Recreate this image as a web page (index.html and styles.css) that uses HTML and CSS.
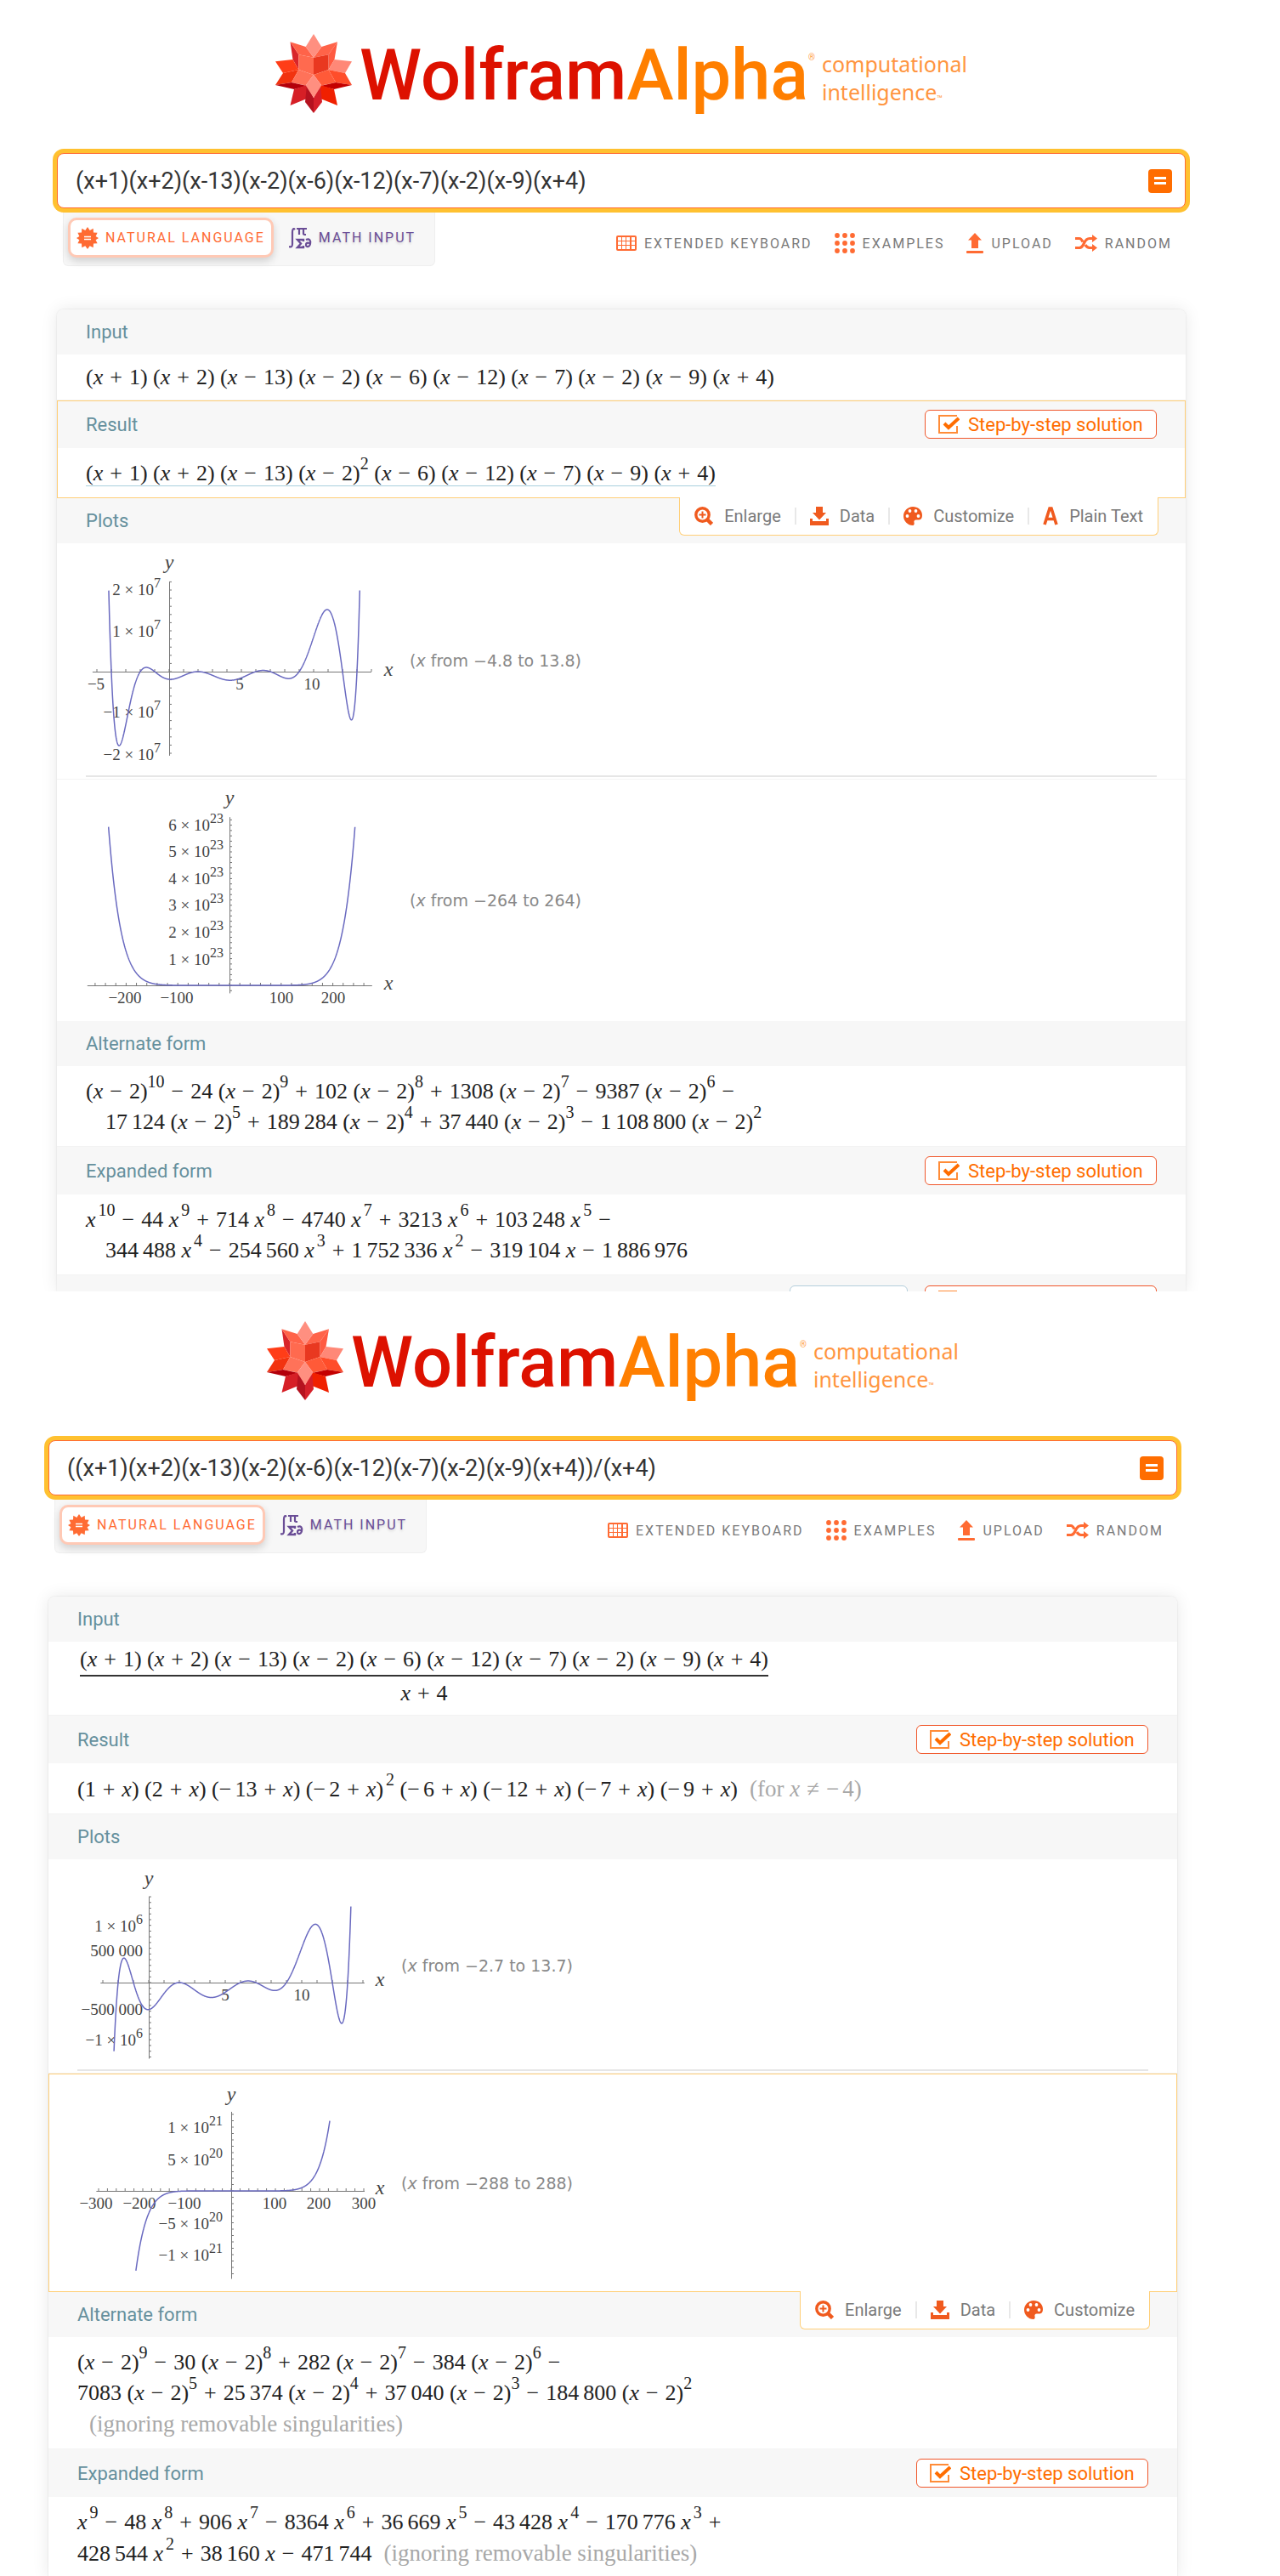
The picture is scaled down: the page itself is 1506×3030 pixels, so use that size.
FILE: index.html
```html
<!DOCTYPE html>
<html lang="en">
<head>
<meta charset="utf-8">
<meta name="viewport" content="width=device-width, initial-scale=1">
<title>WolframAlpha: computational intelligence</title>
<link rel="stylesheet" href="styles.css">
</head>
<body>
<svg class="sprite" aria-hidden="true">
  <symbol id="spikey" viewBox="0 0 90 93">
    <path fill="#d8252a" d="M17.500 9.300 27.400 24.300 27.400 42 20.500 30Z"/>
    <path fill="#ff6349" d="M17.500 9.300 35.700 15 45 27.700 27.400 24.300Z"/>
    <path fill="#ff6349" d="M73 9.300 54.300 15 45 27.700 62.500 24.300Z"/>
    <path fill="#ff5a41" d="M73 9.300 62.500 24.300 62.500 42 69.500 30Z"/>
    <path fill="#ff8f80" d="M45 0 35.700 15 45 27.700 54.300 15Z"/>
    <path fill="#ff6a4f" d="M27.400 24.300 45 27.700 45 48 27.400 42Z"/>
    <path fill="#e93820" d="M45 27.700 62.500 24.300 62.500 42 45 48Z"/>
    <path fill="#ff3d17" d="M0 32.300 20.500 30 27.400 42 9 46Z"/>
    <path fill="#ff8877" d="M90 32.300 69.500 30 62.500 42 82 46Z"/>
    <path fill="#f2330f" d="M0 60 9 46 27.400 42 19 57Z"/>
    <path fill="#ff4d2a" d="M90 60 82 46 62.500 42 71 57Z"/>
    <path fill="#ff7259" d="M27.400 42 45 48 35.700 60.500 19 57Z"/>
    <path fill="#ff5a38" d="M62.500 42 45 48 54.300 60.500 71 57Z"/>
    <path fill="#b3000b" d="M0 60 19 57 37 61 22 65Z"/>
    <path fill="#c40000" d="M90 60 71 57 53 61 69 65Z"/>
    <path fill="#d61f26" d="M17.500 84 22 65 37 60 37 76Z"/>
    <path fill="#f02000" d="M73 84 69 65 53 60 53 76Z"/>
    <path fill="#b5121f" d="M45 93 35 80 37 60 45 75Z"/>
    <path fill="#d6202a" d="M45 93 55 80 53 60 45 75Z"/>
    <path fill="#ff8f80" d="M45 48 35.700 60.500 45 75 54.300 60.500Z"/>
  </symbol>
  <symbol id="burst" viewBox="0 0 26 26">
    <path fill="#ff6b33" d="M13 0l2.700 4 4-2.200.3 4.700 4.600.3-2 4.200L26 13l-3.400 2.200 2 4-4.600.4-.3 4.600-4-2L13 26l-2.700-3.800-4 2-.3-4.600-4.600-.4 2-4L0 13l3.400-2-2-4.200L6 6.500l.3-4.700 4 2.200z"/>
    <path stroke="#fff" stroke-width="1.500" d="M9 11.500h8M9 14.500h8"/>
  </symbol>
  <symbol id="mathsym" viewBox="0 0 27 26">
    <g fill="none" stroke="#6a4d96" stroke-width="2.200">
      <path d="M7 3C5 1 4 3 4 6v14c0 3-1 4-4 3"/>
      <path d="M9 2h12M12 2v7M17 2v6q0 1 3 1"/>
      <path stroke-width="2.400" d="M17 17v-2H10l4 4.500L10 24h7v-2"/>
      <path d="M20 15c4-2 6 1 5 5s-5 4-5 1 4-3 5-1"/>
    </g>
  </symbol>
  <symbol id="keyboard" viewBox="0 0 24 18">
    <rect width="24" height="18" rx="2" fill="#ff6b33"/>
    <path fill="#fff" d="M2 2h4v4H2zM7 2h4v4H7zM12 2h4v4h-4zM18 2h4v4h-4zM2 7h4v4H2zM7 7h4v4H7zM12 7h4v4h-4zM18 7h4v4h-4zM2 12h4v4H2zM7 12h4v4H7zM12 12h4v4h-4zM18 12h4v4h-4z"/>
  </symbol>
  <symbol id="dots" viewBox="0 0 24 24">
    <g fill="#ff6b33"><circle cx="3" cy="3" r="2.900"/><circle cx="12" cy="3" r="2.900"/><circle cx="21" cy="3" r="2.900"/><circle cx="3" cy="12" r="2.900"/><circle cx="12" cy="12" r="2.900"/><circle cx="21" cy="12" r="2.900"/><circle cx="3" cy="21" r="2.900"/><circle cx="12" cy="21" r="2.900"/><circle cx="21" cy="21" r="2.900"/></g>
  </symbol>
  <symbol id="upload" viewBox="0 0 20 24">
    <path fill="#ff6b33" d="M10 0l8 8.500h-4V18H6V8.500H2zM1 21h18q1 0 1 1v1q0 1-1 1H1q-1 0-1-1v-1q0-1 1-1z"/>
  </symbol>
  <symbol id="shuffle" viewBox="0 0 26 20">
    <g fill="none" stroke="#ff6b33" stroke-width="3.200"><path d="M0 4.500h5q2 0 4 4M12 12q2 3.500 5 3.500h4M0 15.500h5q3 0 5.500-5.500T17 4.500h4"/></g>
    <path fill="#ff6b33" d="M20 0l6 4.500L20 9zM20 11l6 4.500-6 4.500z"/>
  </symbol>
  <symbol id="check" viewBox="0 0 25 22">
    <path fill="none" stroke="#ff8c38" stroke-width="2" d="M22 1H1v20h21v-8"/>
    <path fill="none" stroke="#ff6d00" stroke-width="4" d="M7 10l5 5L24 4"/>
  </symbol>
  <symbol id="zoom" viewBox="0 0 22 22">
    <circle cx="9.500" cy="9.500" r="7.700" fill="none" stroke="#f05a1e" stroke-width="3.400"/>
    <path fill="none" stroke="#f05a1e" stroke-width="2" d="M9.500 5.500v8M5.500 9.500h8"/>
    <path stroke="#f05a1e" stroke-width="4.500" d="M14.500 14.500l6 6"/>
  </symbol>
  <symbol id="download" viewBox="0 0 22 22">
    <path fill="#f05a1e" d="M7 0h8v7h4l-8 8.500L3 7h4zM0 14h3v3h16v-3h3v8H0z"/>
  </symbol>
  <symbol id="palette" viewBox="0 0 22 22">
    <path fill="#f05a1e" d="M11 0C17 0 22 4 22 10c0 5-3 6-6 5.500-3-.5-4 1-3.500 3 .5 1.500 0 3.500-1.500 3.500C5 22 0 17 0 11S5 0 11 0z"/>
    <g fill="#fff"><circle cx="7.500" cy="5" r="1.900"/><circle cx="14.500" cy="5" r="1.900"/><circle cx="4.500" cy="11" r="1.900"/><circle cx="17.500" cy="11" r="1.900"/></g>
  </symbol>
  <symbol id="lettera" viewBox="0 0 18 22">
    <path fill="none" stroke="#f05a1e" stroke-width="3.600" d="M2 21L8 2h2l6 19M5 14.500h8"/>
  </symbol>
</svg>

<main>
<section class="query query-first">
  <header class="logo">
    <svg class="spikey"><use href="#spikey"/></svg>
    <span class="brand"><span class="brand-w">Wolfram</span><span class="brand-a">Alpha</span></span>
    <span class="reg">®</span>
    <span class="tagline">computational<br>intelligence<small>™</small></span>
  </header>
  <form class="search">
    <input type="text" aria-label="Query" value="(x+1)(x+2)(x-13)(x-2)(x-6)(x-12)(x-7)(x-2)(x-9)(x+4)">
    <button type="button" class="go" aria-label="Compute"></button>
  </form>
  <div class="bar">
    <div class="modes">
      <button type="button" class="mode mode-on"><svg width="26" height="26"><use href="#burst"/></svg>NATURAL LANGUAGE</button>
      <button type="button" class="mode mode-math"><svg width="27" height="26"><use href="#mathsym"/></svg>MATH INPUT</button>
    </div>
    <nav class="tools">
      <a href="#"><svg width="24" height="18"><use href="#keyboard"/></svg>EXTENDED KEYBOARD</a>
      <a href="#"><svg width="24" height="24"><use href="#dots"/></svg>EXAMPLES</a>
      <a href="#"><svg width="20" height="24"><use href="#upload"/></svg>UPLOAD</a>
      <a href="#"><svg width="26" height="20"><use href="#shuffle"/></svg>RANDOM</a>
    </nav>
  </div>

  <div class="results">
    <article class="pod">
      <h2>Input</h2>
      <div class="math"><p>(<i>x</i><span class="o">+</span>1) (<i>x</i><span class="o">+</span>2) (<i>x</i><span class="o">−</span>13) (<i>x</i><span class="o">−</span>2) (<i>x</i><span class="o">−</span>6) (<i>x</i><span class="o">−</span>12) (<i>x</i><span class="o">−</span>7) (<i>x</i><span class="o">−</span>2) (<i>x</i><span class="o">−</span>9) (<i>x</i><span class="o">+</span>4)</p></div>
    </article>
    <article class="pod pod-active">
      <div class="head"><h2>Result</h2><button type="button" class="step"><svg width="25" height="22"><use href="#check"/></svg>Step-by-step solution</button></div>
      <div class="math math-tall"><p><a href="#">(<i>x</i><span class="o">+</span>1) (<i>x</i><span class="o">+</span>2) (<i>x</i><span class="o">−</span>13) (<i>x</i><span class="o">−</span>2)<sup>2</sup> (<i>x</i><span class="o">−</span>6) (<i>x</i><span class="o">−</span>12) (<i>x</i><span class="o">−</span>7) (<i>x</i><span class="o">−</span>9) (<i>x</i><span class="o">+</span>4)</a></p></div>
      <div class="actions">
        <button type="button"><svg width="22" height="22"><use href="#zoom"/></svg>Enlarge</button>
        <button type="button"><svg width="22" height="22"><use href="#download"/></svg>Data</button>
        <button type="button"><svg width="22" height="22"><use href="#palette"/></svg>Customize</button>
        <button type="button"><svg width="18" height="22"><use href="#lettera"/></svg>Plain Text</button>
      </div>
    </article>
    <article class="pod">
      <h2>Plots</h2>
      <figure class="divided">
        <svg class="plot" width="370" height="275" data-roots="-1,-2,13,2,6,12,7,2,9,-4" data-x="98,17,-5.300,14" data-y="151,4.800e-6,-2.060e7,2.200e7" data-clip="-4.800,13.800,-2e7,2e7" data-tick="1,2e6">
          <g class="labels">
            <text class="var" x="98" y="30">y</text><text class="var" x="356" y="156">x</text>
            <g class="ylab"><text x="88" y="61">2 × 10<tspan dy="-9">7</tspan></text><text x="88" y="110">1 × 10<tspan dy="-9">7</tspan></text><text x="88" y="205">−1 × 10<tspan dy="-9">7</tspan></text><text x="88" y="255">−2 × 10<tspan dy="-9">7</tspan></text></g>
            <text x="12" y="172">−5</text><text x="181" y="172">5</text><text x="266" y="172">10</text>
          </g>
        </svg>
        <figcaption>(<i>x</i> from −4.8 to 13.8)</figcaption>
      </figure>
      <figure>
        <svg class="plot" width="370" height="284" data-roots="-1,-2,13,2,6,12,7,2,9,-4" data-x="169,0.608,-275,276" data-y="242,3.140e-22,-0.300e23,6.300e23" data-clip="-264,264,-1e23,5.970e23" data-tick="20,2e22">
          <g class="labels">
            <text class="var" x="169" y="29">y</text><text class="var" x="356" y="247">x</text>
            <g class="ylab"><text x="162" y="60">6 × 10<tspan dy="-9">23</tspan></text><text x="162" y="91">5 × 10<tspan dy="-9">23</tspan></text><text x="162" y="123">4 × 10<tspan dy="-9">23</tspan></text><text x="162" y="154">3 × 10<tspan dy="-9">23</tspan></text><text x="162" y="186">2 × 10<tspan dy="-9">23</tspan></text><text x="162" y="218">1 × 10<tspan dy="-9">23</tspan></text></g>
            <text x="46" y="263">−200</text><text x="107" y="263">−100</text><text x="230" y="263">100</text><text x="291" y="263">200</text>
          </g>
        </svg>
        <figcaption>(<i>x</i> from −264 to 264)</figcaption>
      </figure>
    </article>
    <article class="pod">
      <h2>Alternate form</h2>
      <div class="math math-tall">
        <p>(<i>x</i><span class="o">−</span>2)<sup>10</sup><span class="o">−</span>24 (<i>x</i><span class="o">−</span>2)<sup>9</sup><span class="o">+</span>102 (<i>x</i><span class="o">−</span>2)<sup>8</sup><span class="o">+</span>1308 (<i>x</i><span class="o">−</span>2)<sup>7</sup><span class="o">−</span>9387 (<i>x</i><span class="o">−</span>2)<sup>6</sup><span class="o">−</span></p>
        <p class="cont">17<span class="t">124</span> (<i>x</i><span class="o">−</span>2)<sup>5</sup><span class="o">+</span>189<span class="t">284</span> (<i>x</i><span class="o">−</span>2)<sup>4</sup><span class="o">+</span>37<span class="t">440</span> (<i>x</i><span class="o">−</span>2)<sup>3</sup><span class="o">−</span>1<span class="t">108</span><span class="t">800</span> (<i>x</i><span class="o">−</span>2)<sup>2</sup></p>
      </div>
    </article>
    <article class="pod">
      <div class="head"><h2>Expanded form</h2><button type="button" class="step"><svg width="25" height="22"><use href="#check"/></svg>Step-by-step solution</button></div>
      <div class="math math-tall">
        <p><i>x</i><sup>10</sup><span class="o">−</span>44 <i>x</i><sup>9</sup><span class="o">+</span>714 <i>x</i><sup>8</sup><span class="o">−</span>4740 <i>x</i><sup>7</sup><span class="o">+</span>3213 <i>x</i><sup>6</sup><span class="o">+</span>103<span class="t">248</span> <i>x</i><sup>5</sup><span class="o">−</span></p>
        <p class="cont">344<span class="t">488</span> <i>x</i><sup>4</sup><span class="o">−</span>254<span class="t">560</span> <i>x</i><sup>3</sup><span class="o">+</span>1<span class="t">752</span><span class="t">336</span> <i>x</i><sup>2</sup><span class="o">−</span>319<span class="t">104</span> <i>x</i><span class="o">−</span>1<span class="t">886</span><span class="t">976</span></p>
      </div>
    </article>
    <div class="pod-cut">
      <button type="button" class="digits" aria-label="More"></button>
      <button type="button" class="step" aria-label="Step-by-step solution"><svg width="25" height="22"><use href="#check"/></svg></button>
    </div>
  </div>
</section>

<section class="query query-second">
  <header class="logo">
    <svg class="spikey"><use href="#spikey"/></svg>
    <span class="brand"><span class="brand-w">Wolfram</span><span class="brand-a">Alpha</span></span>
    <span class="reg">®</span>
    <span class="tagline">computational<br>intelligence<small>™</small></span>
  </header>
  <form class="search">
    <input type="text" aria-label="Query" value="((x+1)(x+2)(x-13)(x-2)(x-6)(x-12)(x-7)(x-2)(x-9)(x+4))/(x+4)">
    <button type="button" class="go" aria-label="Compute"></button>
  </form>
  <div class="bar">
    <div class="modes">
      <button type="button" class="mode mode-on"><svg width="26" height="26"><use href="#burst"/></svg>NATURAL LANGUAGE</button>
      <button type="button" class="mode mode-math"><svg width="27" height="26"><use href="#mathsym"/></svg>MATH INPUT</button>
    </div>
    <nav class="tools">
      <a href="#"><svg width="24" height="18"><use href="#keyboard"/></svg>EXTENDED KEYBOARD</a>
      <a href="#"><svg width="24" height="24"><use href="#dots"/></svg>EXAMPLES</a>
      <a href="#"><svg width="20" height="24"><use href="#upload"/></svg>UPLOAD</a>
      <a href="#"><svg width="26" height="20"><use href="#shuffle"/></svg>RANDOM</a>
    </nav>
  </div>

  <div class="results">
    <article class="pod">
      <h2>Input</h2>
      <div class="math math-frac">
        <div class="frac">
          <p class="num">(<i>x</i><span class="o">+</span>1) (<i>x</i><span class="o">+</span>2) (<i>x</i><span class="o">−</span>13) (<i>x</i><span class="o">−</span>2) (<i>x</i><span class="o">−</span>6) (<i>x</i><span class="o">−</span>12) (<i>x</i><span class="o">−</span>7) (<i>x</i><span class="o">−</span>2) (<i>x</i><span class="o">−</span>9) (<i>x</i><span class="o">+</span>4)</p>
          <p><i>x</i><span class="o">+</span>4</p>
        </div>
      </div>
    </article>
    <article class="pod">
      <div class="head"><h2>Result</h2><button type="button" class="step"><svg width="25" height="22"><use href="#check"/></svg>Step-by-step solution</button></div>
      <div class="math math-tall"><p>(1<span class="o">+</span><i>x</i>) (2<span class="o">+</span><i>x</i>) (<span class="neg">−</span>13<span class="o">+</span><i>x</i>) (<span class="neg">−</span>2<span class="o">+</span><i>x</i>)<sup>2</sup> (<span class="neg">−</span>6<span class="o">+</span><i>x</i>) (<span class="neg">−</span>12<span class="o">+</span><i>x</i>) (<span class="neg">−</span>7<span class="o">+</span><i>x</i>) (<span class="neg">−</span>9<span class="o">+</span><i>x</i>)<span class="note">(for <i>x</i><span class="o">≠</span><span class="neg">−</span>4)</span></p></div>
    </article>
    <article class="pod">
      <h2>Plots</h2>
      <figure class="divided">
        <svg class="plot" width="370" height="249" data-roots="-1,-2,13,2,6,12,7,2,9" data-x="84,18,-3.150,14.100" data-y="145,6.730e-5,-1.330e6,1.500e6" data-clip="-2.700,13.700,-1.230e6,1.360e6" data-tick="1,1e5">
          <g class="labels">
            <text class="var" x="84" y="30">y</text><text class="var" x="356" y="149">x</text>
            <g class="ylab"><text x="77" y="85">1 × 10<tspan dy="-9">6</tspan></text><text x="77" y="114">500 000</text><text x="77" y="183">−500 000</text><text x="77" y="219">−1 × 10<tspan dy="-9">6</tspan></text></g>
            <text x="174" y="166">5</text><text x="264" y="166">10</text>
          </g>
        </svg>
        <figcaption>(<i>x</i> from −2.7 to 13.7)</figcaption>
      </figure>
    </article>
    <article class="pod pod-active">
      <figure>
        <svg class="plot" width="370" height="257" data-roots="-1,-2,13,2,6,12,7,2,9" data-x="181,0.520,-305,302" data-y="138,7.500e-20,-1.380e21,1.240e21" data-clip="-288,288,-1.260e21,1.100e21" data-tick="20,1e20">
          <g class="labels">
            <text class="var" x="181" y="32">y</text><text class="var" x="356" y="142">x</text>
            <g class="ylab"><text x="171" y="70">1 × 10<tspan dy="-9">21</tspan></text><text x="171" y="108">5 × 10<tspan dy="-9">20</tspan></text><text x="171" y="183">−5 × 10<tspan dy="-9">20</tspan></text><text x="171" y="220">−1 × 10<tspan dy="-9">21</tspan></text></g>
            <text x="22" y="159">−300</text><text x="73" y="159">−200</text><text x="126" y="159">−100</text><text x="232" y="159">100</text><text x="284" y="159">200</text><text x="337" y="159">300</text>
          </g>
        </svg>
        <figcaption>(<i>x</i> from −288 to 288)</figcaption>
      </figure>
      <div class="actions">
        <button type="button"><svg width="22" height="22"><use href="#zoom"/></svg>Enlarge</button>
        <button type="button"><svg width="22" height="22"><use href="#download"/></svg>Data</button>
        <button type="button"><svg width="22" height="22"><use href="#palette"/></svg>Customize</button>
      </div>
    </article>
    <article class="pod">
      <h2>Alternate form</h2>
      <div class="math math-tall">
        <p>(<i>x</i><span class="o">−</span>2)<sup>9</sup><span class="o">−</span>30 (<i>x</i><span class="o">−</span>2)<sup>8</sup><span class="o">+</span>282 (<i>x</i><span class="o">−</span>2)<sup>7</sup><span class="o">−</span>384 (<i>x</i><span class="o">−</span>2)<sup>6</sup><span class="o">−</span></p>
        <p>7083 (<i>x</i><span class="o">−</span>2)<sup>5</sup><span class="o">+</span>25<span class="t">374</span> (<i>x</i><span class="o">−</span>2)<sup>4</sup><span class="o">+</span>37<span class="t">040</span> (<i>x</i><span class="o">−</span>2)<sup>3</sup><span class="o">−</span>184<span class="t">800</span> (<i>x</i><span class="o">−</span>2)<sup>2</sup></p>
        <p><span class="note">(ignoring removable singularities)</span></p>
      </div>
    </article>
    <article class="pod">
      <div class="head"><h2>Expanded form</h2><button type="button" class="step"><svg width="25" height="22"><use href="#check"/></svg>Step-by-step solution</button></div>
      <div class="math math-tall">
        <p><i>x</i><sup>9</sup><span class="o">−</span>48 <i>x</i><sup>8</sup><span class="o">+</span>906 <i>x</i><sup>7</sup><span class="o">−</span>8364 <i>x</i><sup>6</sup><span class="o">+</span>36<span class="t">669</span> <i>x</i><sup>5</sup><span class="o">−</span>43<span class="t">428</span> <i>x</i><sup>4</sup><span class="o">−</span>170<span class="t">776</span> <i>x</i><sup>3</sup><span class="o">+</span></p>
        <p>428<span class="t">544</span> <i>x</i><sup>2</sup><span class="o">+</span>38<span class="t">160</span> <i>x</i><span class="o">−</span>471<span class="t">744</span><span class="note">(ignoring removable singularities)</span></p>
      </div>
    </article>
  </div>
</section>
</main>
<script src="plots.js"></script>
</body>
</html>
```

FILE: styles.css
```css
* { box-sizing: border-box; }

body {
  margin: 0;
  background: #fff;
  font-family: Roboto, "Liberation Sans", sans-serif;
  font-size: 22px;
}

button { font: inherit; cursor: pointer; }
svg { display: block; flex: none; }
.sprite { position: absolute; width: 0; height: 0; }

main { overflow: hidden; }
.query { overflow: hidden; }
.query-first { padding: 40px 111px 0 67px; }
.query-second { padding: 35px 121px 0 57px; }

/* Logo */
.logo {
  display: flex;
  justify-content: center;
  height: 93px;
  margin-bottom: 47px;
}
.spikey { width: 90px; height: 93px; margin-right: 9px; }
.brand { font-size: 83px; line-height: 98px; font-weight: 500; white-space: nowrap; }
.brand-w { color: #dd1100; }
.brand-a { color: #ff7f00; }
.reg { font-size: 10px; line-height: 12px; color: #ff9a45; margin: 22px 8px 0 0; }
.tagline {
  padding-top: 19px;
  font-family: "Noto Sans", sans-serif;
  font-size: 25px;
  line-height: 33px;
  color: #ff9540;
}
.tagline small { font-size: 8px; }

/* Search box */
.search {
  position: relative;
  z-index: 1;
  display: flex;
  align-items: center;
  height: 65px;
  padding-right: 15px;
  background: #fff;
  border: 1px solid #ff6b33;
  border-radius: 8px;
  box-shadow: 0 0 0 5px #ffc130;
}
.search input {
  flex: 1;
  min-width: 0;
  padding: 0 0 0 21px;
  border: 0;
  outline: 0;
  background: none;
  font-family: inherit;
  font-size: 27px;
  color: #333;
}
.go {
  display: grid;
  place-content: center;
  gap: 3px;
  width: 28px;
  height: 28px;
  padding: 0;
  border: 0;
  border-radius: 4px;
  background: #ff6d00;
}
.go::before, .go::after { content: ""; width: 14px; height: 3px; background: #fff; }

/* Mode tabs and tools */
.bar {
  display: flex;
  justify-content: space-between;
  margin-bottom: 51px;
  padding: 0 16px 0 7px;
  font-size: 16px;
  letter-spacing: 2px;
}
.modes {
  display: flex;
  padding: 11px 12px 9px 5px;
  background: #f7f7f7;
  border: 1px solid #efefef;
  border-top: 0;
  border-radius: 0 0 6px 6px;
}
.mode {
  display: flex;
  align-items: center;
  gap: 8px;
  height: 47px;
  padding: 0 7px;
  border: 3px solid transparent;
  border-radius: 10px;
  background: none;
  letter-spacing: inherit;
  white-space: nowrap;
}
.mode-on {
  color: #ff6b33;
  background: #fff;
  border-color: #ffc9b5;
  box-shadow: 0 4px 10px rgba(0, 0, 0, .16);
}
.mode-math { margin-left: 8px; color: #6a4d96; text-shadow: 0 2px 3px rgba(0, 0, 0, .15); }
.tools { display: flex; align-items: center; gap: 26px; padding-top: 14px; }
.tools a {
  display: flex;
  align-items: center;
  gap: 9px;
  color: #7a7a7a;
  text-decoration: none;
  white-space: nowrap;
}

/* Result pods */
.results {
  background: #fff;
  border-radius: 8px 8px 0 0;
  box-shadow: 0 0 2px rgba(0, 0, 0, .12), 0 0 20px rgba(0, 0, 0, .09);
}
.pod { position: relative; }
.pod:first-child h2 { border-radius: 8px 8px 0 0; }
.pod h2 {
  margin: 0;
  padding: 0 34px;
  background: #f7f7f7;
  color: #65909d;
  font-size: 22px;
  font-weight: 400;
  line-height: 53px;
}
.head {
  display: flex;
  align-items: center;
  justify-content: space-between;
  height: 56px;
  padding-right: 34px;
  background: #f7f7f7;
}
.pod-active { outline: 1px solid #ffcf78; outline-offset: -1px; }

.step {
  display: flex;
  align-items: center;
  gap: 10px;
  width: 273px;
  height: 34px;
  padding: 0 15px;
  border: 1px solid #f0572b;
  border-radius: 6px;
  background: #fff;
  color: #ff6d00;
  white-space: nowrap;
}
.pod-cut {
  display: flex;
  justify-content: flex-end;
  gap: 20px;
  height: 19px;
  padding: 12px 34px 0;
  background: #f7f7f7;
  overflow: hidden;
}
.digits {
  width: 139px;
  height: 34px;
  border: 1px solid #b5cfdc;
  border-radius: 6px;
  background: #fff;
}

.actions {
  position: absolute;
  z-index: 2;
  top: 100%;
  right: 32px;
  display: flex;
  align-items: center;
  height: 45px;
  margin-top: -1px;
  padding: 0 1px;
  background: #fff;
  border: 1px solid #ffcf78;
  border-top: 0;
  border-radius: 0 0 6px 6px;
}
.actions button {
  display: flex;
  align-items: center;
  gap: 13px;
  height: 20px;
  padding: 0 16px;
  border: 0;
  background: none;
  color: #7a7a7a;
  font-size: 20px;
  white-space: nowrap;
}
.actions button + button { border-left: 2px solid #e8e8e8; }

/* Formulas */
.math {
  padding: 9px 34px 8px;
  border-bottom: 1px solid #f3f3f3;
  font-family: "Liberation Serif", "Times New Roman", serif;
  font-size: 26px;
  color: #222;
}
.math-tall { padding: 12px 34px 10px; }
.math p { margin: 0; line-height: 36px; white-space: nowrap; }
.math .cont { padding-left: 23px; }
.math .o { margin: 0 8px; }
.math .t { margin-left: 5px; }
.math .neg { margin-right: 4px; }
.math sup { font-size: 20px; line-height: 0; vertical-align: 13px; }
.math i + sup { margin-left: 3px; }
.math a { color: inherit; text-decoration: none; border-bottom: 1px solid #a9cfdd; }
.note { margin-left: 14px; font-size: 27px; color: #a8a8a8; }
.math-frac { display: flex; padding: 3px 37px 7px; }
.frac { text-align: center; }
.frac .num { margin-bottom: 2px; border-bottom: 2px solid #333; }

/* Plots */
figure {
  display: flex;
  align-items: center;
  gap: 11px;
  margin: 0;
  padding: 0 34px;
}
.divided {
  padding-bottom: 2px;
  border-bottom: 1px solid #f3f3f3;
  background: linear-gradient(#e6e6e6, #e6e6e6) 34px calc(100% - 2px) / calc(100% - 68px) 2px no-repeat;
}
figcaption { font-family: "DejaVu Sans", sans-serif; font-size: 19px; color: #888; }
.plot .curve { fill: none; stroke: #6a6ac0; stroke-width: 1.5; stroke-linejoin: round; }
.plot .axis { fill: none; stroke: #777; stroke-width: 1; }
.labels text {
  font-family: "Liberation Serif", "Times New Roman", serif;
  font-size: 19px;
  fill: #444;
  text-anchor: middle;
}
.labels .ylab text { text-anchor: end; }
.labels tspan { font-size: 16px; }
.labels text.var { font-size: 24px; font-style: italic; }
```

FILE: plots.js
```js
// Draws the axes, tick marks and curve of each polynomial plot.
const NS = 'http://www.w3.org/2000/svg';

function addPath(svg, cls, d) {
  const path = document.createElementNS(NS, 'path');
  path.setAttribute('class', cls);
  path.setAttribute('d', d);
  svg.appendChild(path);
}

document.querySelectorAll('.plot').forEach((svg) => {
  const nums = (name) => svg.dataset[name].split(',').map(Number);
  const roots = nums('roots');
  const [x0, sx, xMin, xMax] = nums('x');
  const [y0, sy, yMin, yMax] = nums('y');
  const [from, to, low, high] = nums('clip');
  const [tx, ty] = nums('tick');
  const px = (x) => x0 + x * sx;
  const py = (y) => y0 - y * sy;
  const f = (x) => roots.reduce((p, r) => p * (x - r), 1);

  let axis = `M${px(xMin)} ${y0 + 0.5}H${px(xMax)}M${x0 + 0.5} ${py(yMin)}V${py(yMax)}`;
  for (let i = Math.ceil(xMin / tx); i * tx <= xMax; i++) axis += `M${px(i * tx)} ${y0}v-3`;
  for (let i = Math.ceil(yMin / ty); i * ty <= yMax; i++) axis += `M${x0} ${py(i * ty)}h3`;
  addPath(svg, 'axis', axis);

  let d = '';
  const n = 3000;
  for (let i = 0; i <= n; i++) {
    const x = from + ((to - from) * i) / n;
    const y = f(x);
    if (y < low || y > high) continue;
    d += `${d ? 'L' : 'M'}${px(x).toFixed(2)} ${py(y).toFixed(2)}`;
  }
  addPath(svg, 'curve', d);
});
```
